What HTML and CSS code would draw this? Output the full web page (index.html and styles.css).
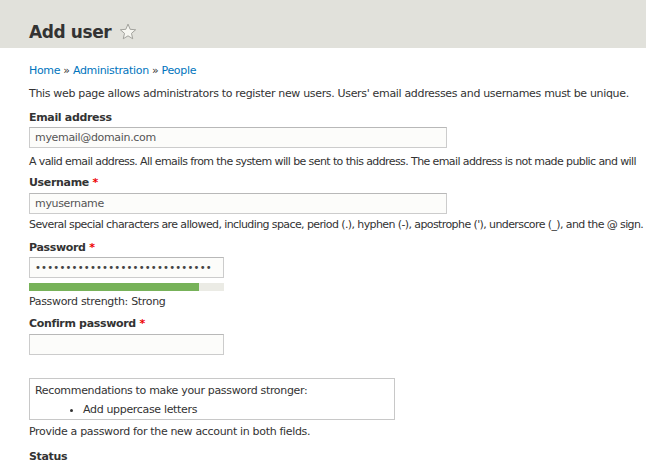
FILE: index.html
```html
<!DOCTYPE html>
<html>
<head>
<meta charset="utf-8">
<link rel="stylesheet" href="styles.css">
</head>
<body>
<header class="page-header">
  <h1 class="page-title">Add user</h1>
  <svg class="star" width="18" height="18" viewBox="0 0 16 16"><path d="M8 1 L9.9 5.6 L14.8 6 L11.1 9.2 L12.2 14 L8 11.4 L3.8 14 L4.9 9.2 L1.2 6 L6.1 5.6 Z" fill="#f6f6f1" stroke="#9a9a94" stroke-width="0.8" stroke-linejoin="round"/></svg>
</header>
<main class="content">
  <nav class="breadcrumb"><a href="#">Home</a> » <a href="#">Administration</a> » <a href="#">People</a></nav>
  <p class="intro">This web page allows administrators to register new users. Users' email addresses and usernames must be unique.</p>

  <div class="form-item first">
    <label class="label">Email address</label>
    <input class="text wide" type="text" value="myemail@domain.com">
    <div class="description email-desc">A valid email address. All emails from the system will be sent to this address. The email address is not made public and will</div>
  </div>

  <div class="form-item username">
    <label class="label">Username <span class="req">*</span></label>
    <input class="text wide" type="text" value="myusername">
    <div class="description user-desc">Several special characters are allowed, including space, period (.), hyphen (-), apostrophe ('), underscore (_), and the @ sign.</div>
  </div>

  <div class="form-item password">
    <label class="label">Password <span class="req">*</span></label>
    <input class="text narrow pw" type="password" value="abcdefghijklmnopqrstuvwxyzabc">
    <div class="strength"><div class="strength-fill" style="width: 170px"></div></div>
    <div class="strength-text">Password strength: Strong</div>
  </div>

  <div class="form-item confirm">
    <label class="label">Confirm password <span class="req">*</span></label>
    <input class="text narrow" type="password" value="">
  </div>

  <div class="suggestions">
    <div>Recommendations to make your password stronger:</div>
    <ul class="sugg-list"><li>Add uppercase letters</li></ul>
  </div>
  <div class="pw-desc">Provide a password for the new account in both fields.</div>

  <div class="form-item status">
    <label class="label">Status</label>
  </div>
</main>
</body>
</html>
```
FILE: styles.css
```css
html, body {
  margin: 0;
  padding: 0;
  background: #fff;
  overflow: hidden;
}
body {
  font-family: "DejaVu Sans", Verdana, sans-serif;
  font-size: 11px;
  line-height: 18px;
  letter-spacing: -0.33px;
  color: #333;
  width: 646px;
  height: 465px;
}
.page-header {
  background: #e1e1db;
  height: 48px;
  padding: 0 29px;
  display: flex;
  align-items: flex-start;
  gap: 8px;
}
.page-title {
  margin: 0;
  font-size: 17px;
  font-weight: bold;
  letter-spacing: -0.4px;
  color: #333;
  line-height: 24px;
  padding-top: 20px;
}
.star {
  margin-top: 23px;
}
.content {
  padding: 0 29px;
  white-space: nowrap;
}
.breadcrumb {
  margin-top: 14px;
}
.breadcrumb a {
  color: #0074bd;
  text-decoration: none;
}
.intro {
  margin: 5px 0 0;
}
.form-item {
  margin-top: 3px;
}
.form-item.first {
  margin-top: 6px;
}
.form-item.password {
  margin-top: 5px;
}
.form-item.confirm {
  margin-top: 4px;
}
.label {
  display: block;
  font-weight: bold;
  height: 18px;
}
.req {
  color: #e00;
}
.text {
  display: block;
  box-sizing: border-box;
  height: 21px;
  margin: 1px 0 0;
  padding: 2px 5px;
  font-family: "DejaVu Sans", Verdana, sans-serif;
  font-size: 11px;
  letter-spacing: -0.33px;
  color: #555;
  background: #fcfcfa;
  border: 1px solid #ccc;
  border-top-color: #b8b8b8;
  border-radius: 0;
  outline: none;
}
.first .text,
.password .text {
  margin-top: 0;
}
.wide {
  width: 418px;
}
.narrow {
  width: 195px;
}
.pw {
  font-size: 10px;
  letter-spacing: 0.2px;
  color: #444;
}
.description {
  letter-spacing: -0.6px;
}
.email-desc {
  margin-top: 5px;
}
.user-desc {
  margin-top: 2px;
}
.strength {
  margin-top: 5px;
  width: 195px;
  height: 8px;
  background: #ebebe5;
}
.strength-fill {
  height: 100%;
  background: #77b259;
}
.strength-text {
  margin-top: 2px;
}
.suggestions {
  margin-top: 23px;
  width: 366px;
  box-sizing: border-box;
  border: 1px solid #c8c8c8;
  padding: 3px 5px 0;
}
.sugg-list {
  margin: 1px 0 0;
  padding-left: 48px;
  list-style: disc;
}
.pw-desc {
  margin-top: 3px;
}
.status {
  margin-top: 7px;
}
```
